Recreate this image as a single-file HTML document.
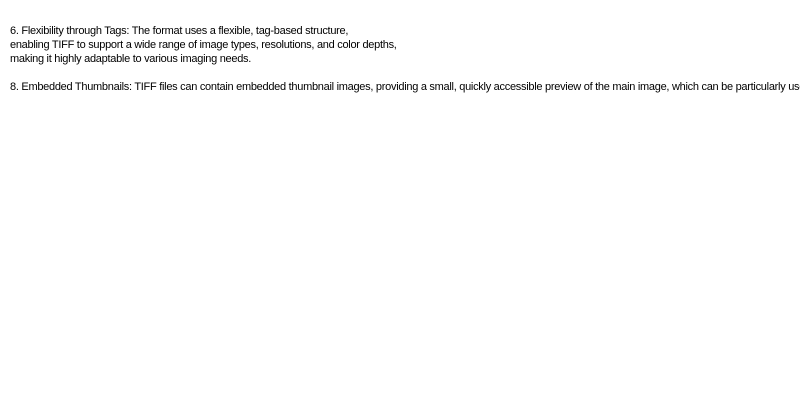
<!DOCTYPE html>
<html><head><style>
html,body{margin:0;padding:0;background:#fff;width:800px;height:400px;overflow:hidden}
.t{position:absolute;left:10px;font-family:"Liberation Sans",sans-serif;font-size:11px;letter-spacing:-0.28px;color:#000;white-space:nowrap;line-height:14px}
</style></head><body>
<div class="t" style="top:24px">6. Flexibility through Tags: The format uses a flexible, tag-based structure,</div>
<div class="t" style="top:38px">enabling TIFF to support a wide range of image types, resolutions, and color depths,</div>
<div class="t" style="top:52px">making it highly adaptable to various imaging needs.</div>
<div class="t" style="top:80px">8. Embedded Thumbnails: TIFF files can contain embedded thumbnail images, providing a small, quickly accessible preview of the main image, which can be particularly useful.</div>
</body></html>
